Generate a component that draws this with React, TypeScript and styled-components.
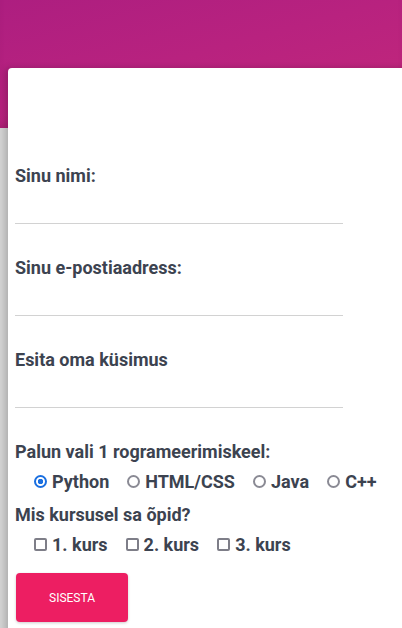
import styled, { createGlobalStyle } from 'styled-components';

const GlobalStyle = createGlobalStyle`
  html, body {
    margin: 0;
    padding: 0;
    background: #d3d3d3;
    font-family: Roboto, "Liberation Sans", sans-serif;
    overflow: hidden;
  }
`

const languages = ['Python', 'HTML/CSS', 'Java', 'C++'];
const courses = ['1. kurs', '2. kurs', '3. kurs'];

const App = () => {
  return (<Page>
    <GlobalStyle />
    <Header />
    <Card>
      <Field>
        <Label>Sinu nimi:</Label>
        <TextInput type="text" />
      </Field>
      <Field>
        <Label>Sinu e-postiaadress:</Label>
        <TextInput type="email" />
      </Field>
      <Field>
        <Label>Esita oma küsimus</Label>
        <TextInput type="text" />
      </Field>
      <GroupLabel>Palun vali 1 rogrameerimiskeel:</GroupLabel>
      <OptionRow>
        {languages.map((l, i) => (
          <Option key={l}>
            <Radio type="radio" name="lang" defaultChecked={i === 0} />
            {l}
          </Option>
        ))}
      </OptionRow>
      <GroupLabel>Mis kursusel sa õpid?</GroupLabel>
      <OptionRow>
        {courses.map((c) => (
          <Option key={c}>
            <Checkbox type="checkbox" />
            {c}
          </Option>
        ))}
      </OptionRow>
      <SubmitButton>Sisesta</SubmitButton>
    </Card>
  </Page>);
};

export default App;

const Page = styled.div`
  width: 402px;
  height: 628px;
  overflow: hidden;
`
const Header = styled.div`
  height: 128px;
  background: linear-gradient(165deg, #ad1e80 0%, #b8227f 45%, #c3287a 100%);
  box-shadow: inset 0 -8px 10px -6px rgba(90, 10, 60, 0.25);
`
const Card = styled.div`
  position: relative;
  width: 430px;
  margin: -60px 0 0 8px;
  padding: 97px 0 20px 7px;
  background: #fff;
  border-radius: 4px 0 0 0;
  box-shadow: -3px 0 6px rgba(0, 0, 0, 0.18);
  min-height: 600px;
  box-sizing: border-box;
`
const Field = styled.div`
  display: flex;
  flex-direction: column;
  width: 328px;
  margin-bottom: 33px;
`
const Label = styled.label`
  font-size: 18px;
  font-weight: 700;
  line-height: 22px;
  color: #3c4350;
`
const TextInput = styled.input`
  height: 34px;
  margin-top: 3px;
  border: none;
  border-bottom: 1px solid #d2d2d2;
  outline: none;
  background: transparent;
  box-sizing: border-box;
`
const GroupLabel = styled.div`
  font-size: 18px;
  font-weight: 700;
  line-height: 22px;
  color: #3c4350;
`
const OptionRow = styled.div`
  display: flex;
  align-items: center;
  gap: 13px;
  padding-left: 14px;
  margin: 6px 0 11px;
  height: 24px;
`
const Option = styled.label`
  display: flex;
  align-items: center;
  font-size: 18px;
  font-weight: 700;
  color: #3c4350;
`
const Radio = styled.input`
  appearance: none;
  width: 13px;
  height: 13px;
  margin: 0 5px 0 5px;
  border: 2px solid #8a8a94;
  border-radius: 50%;
  box-sizing: border-box;
  background: #fff;

  &:checked {
    border-color: #1a6fe0;
    background: radial-gradient(circle, #1a6fe0 0 2.5px, #fff 3px);
  }
`
const Checkbox = styled.input`
  appearance: none;
  width: 13px;
  height: 13px;
  margin: 0 5px 0 5px;
  border: 2px solid #7e7e88;
  border-radius: 2px;
  box-sizing: border-box;
  background: #fff;
`
const SubmitButton = styled.button`
  display: block;
  width: 112px;
  height: 49px;
  margin: 17px 0 0 1px;
  border: none;
  border-radius: 4px;
  background: #ed1e62;
  color: #fff;
  font-family: Roboto, "Liberation Sans", sans-serif;
  font-size: 12px;
  text-transform: uppercase;
  box-shadow: 0 1px 3px rgba(0, 0, 0, 0.2);
`
